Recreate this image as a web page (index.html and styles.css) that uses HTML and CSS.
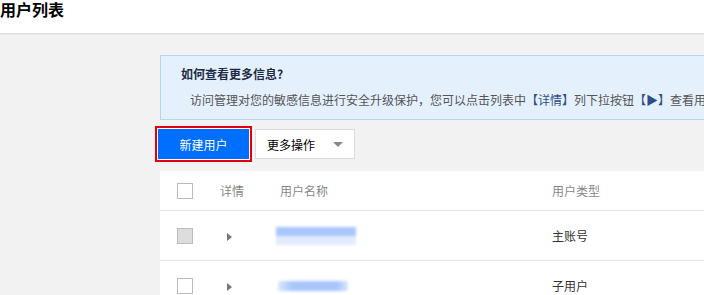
FILE: index.html
```html
<!DOCTYPE html>
<html lang="zh">
<head>
    <meta charset="UTF-8">
    <title>用户列表</title>
    <link rel="stylesheet" href="styles.css">
</head>
<body>
    <div class="page-header">
        <h1 class="page-title">用户列表</h1>
    </div>

    <div class="content">
        <div class="notice">
            <div class="notice-title">如何查看更多信息?</div>
            <div class="notice-text">访问管理对您的敏感信息进行安全升级保护，您可以点击列表中<span class="hl">【详情】</span>列下拉按钮<span class="hl">【▶】</span>查看用户的手机、邮箱等敏感信息。</div>
        </div>

        <div class="toolbar">
            <button class="btn btn-primary">新建用户</button>
            <button class="btn btn-more">更多操作<span class="caret"></span></button>
        </div>

        <div class="table">
            <div class="row row-head">
                <div class="cell"><span class="checkbox"></span></div>
                <div class="cell">详情</div>
                <div class="cell">用户名称</div>
                <div class="cell">用户类型</div>
            </div>
            <div class="row">
                <div class="cell"><span class="checkbox disabled"></span></div>
                <div class="cell"><span class="arrow"></span></div>
                <div class="cell"><span class="blur-name"></span></div>
                <div class="cell">主账号</div>
            </div>
            <div class="row">
                <div class="cell"><span class="checkbox"></span></div>
                <div class="cell"><span class="arrow"></span></div>
                <div class="cell"><span class="blur-name short"></span></div>
                <div class="cell">子用户</div>
            </div>
        </div>
    </div>
</body>
</html>
```

FILE: styles.css
```css
body {
    margin: 0;
    font-family: "Noto Sans CJK SC", "Liberation Sans", sans-serif;
    font-size: 12px;
    color: #333;
    background-color: #f2f2f2;
    overflow: hidden;
}

.page-header {
    height: 33px;
    background-color: #fff;
    border-bottom: 1px solid #dcdcdc;
    box-shadow: 0 1px 0 #e9e9e9;
}

.page-title {
    margin: 0;
    font-size: 16px;
    line-height: 18px;
    font-weight: bold;
    color: #000;
}

.content {
    padding: 21px 0 0 160px;
}

.notice {
    width: 700px;
    background-color: #e5f0fd;
    border: 1px solid #b7d3f3;
    padding: 8px 20px 9px 20px;
}

.notice-title {
    font-weight: bold;
    line-height: 20px;
    color: #1d2b45;
    margin-bottom: 6px;
}

.notice-text {
    padding-left: 9px;
    line-height: 20px;
    color: #555;
    white-space: nowrap;
}

.notice-text .hl {
    color: #2e4f86;
}

.toolbar {
    display: flex;
    gap: 6px;
    margin-top: 9px;
    margin-left: -2px;
}

.btn {
    height: 30px;
    padding: 0;
    font-family: inherit;
    font-size: 12px;
    border: none;
    cursor: pointer;
}

.btn-primary {
    width: 91px;
    background-color: #006eff;
    color: #fff;
    box-shadow: 0 0 0 1px #fff, 0 0 0 3px #e1000b;
}

.btn-more {
    width: 100px;
    display: flex;
    align-items: center;
    justify-content: space-between;
    padding: 0 11px 0 11px;
    background-color: #fff;
    border: 1px solid #ddd;
    color: #000;
}

.caret {
    width: 0;
    height: 0;
    border-left: 5px solid transparent;
    border-right: 5px solid transparent;
    border-top: 5px solid #888;
}

.table {
    width: 600px;
    margin-top: 12px;
    background-color: #fff;
}

.row {
    display: grid;
    grid-template-columns: 60px 60px 272px 1fr;
    align-items: center;
    height: 49px;
    border-bottom: 1px solid #e2e2e2;
    color: #333;
}

.row-head {
    height: 39px;
    color: #888;
}

.cell:first-child {
    padding-left: 17px;
    display: flex;
}

.checkbox {
    width: 14px;
    height: 14px;
    border: 1px solid #bbb;
    background-color: #fff;
}

.checkbox.disabled {
    background-color: #ddd;
}

.arrow {
    display: inline-block;
    margin-left: 7px;
    width: 0;
    height: 0;
    border-top: 4px solid transparent;
    border-bottom: 4px solid transparent;
    border-left: 5px solid #777;
}

.blur-name {
    display: block;
    width: 80px;
    height: 18px;
    margin-left: -4px;
    background: linear-gradient(to bottom, #a9c6fb 0, #a9c6fb 50%, #e2ebfd 50%, #e2ebfd 100%);
    filter: blur(1.5px);
}

.blur-name.short {
    width: 70px;
    height: 10px;
    margin-left: -2px;
    background: linear-gradient(to right, #dbe6fc 0, #a9c6fb 20%, #a9c6fb 85%, #dbe6fc 100%);
}
```
